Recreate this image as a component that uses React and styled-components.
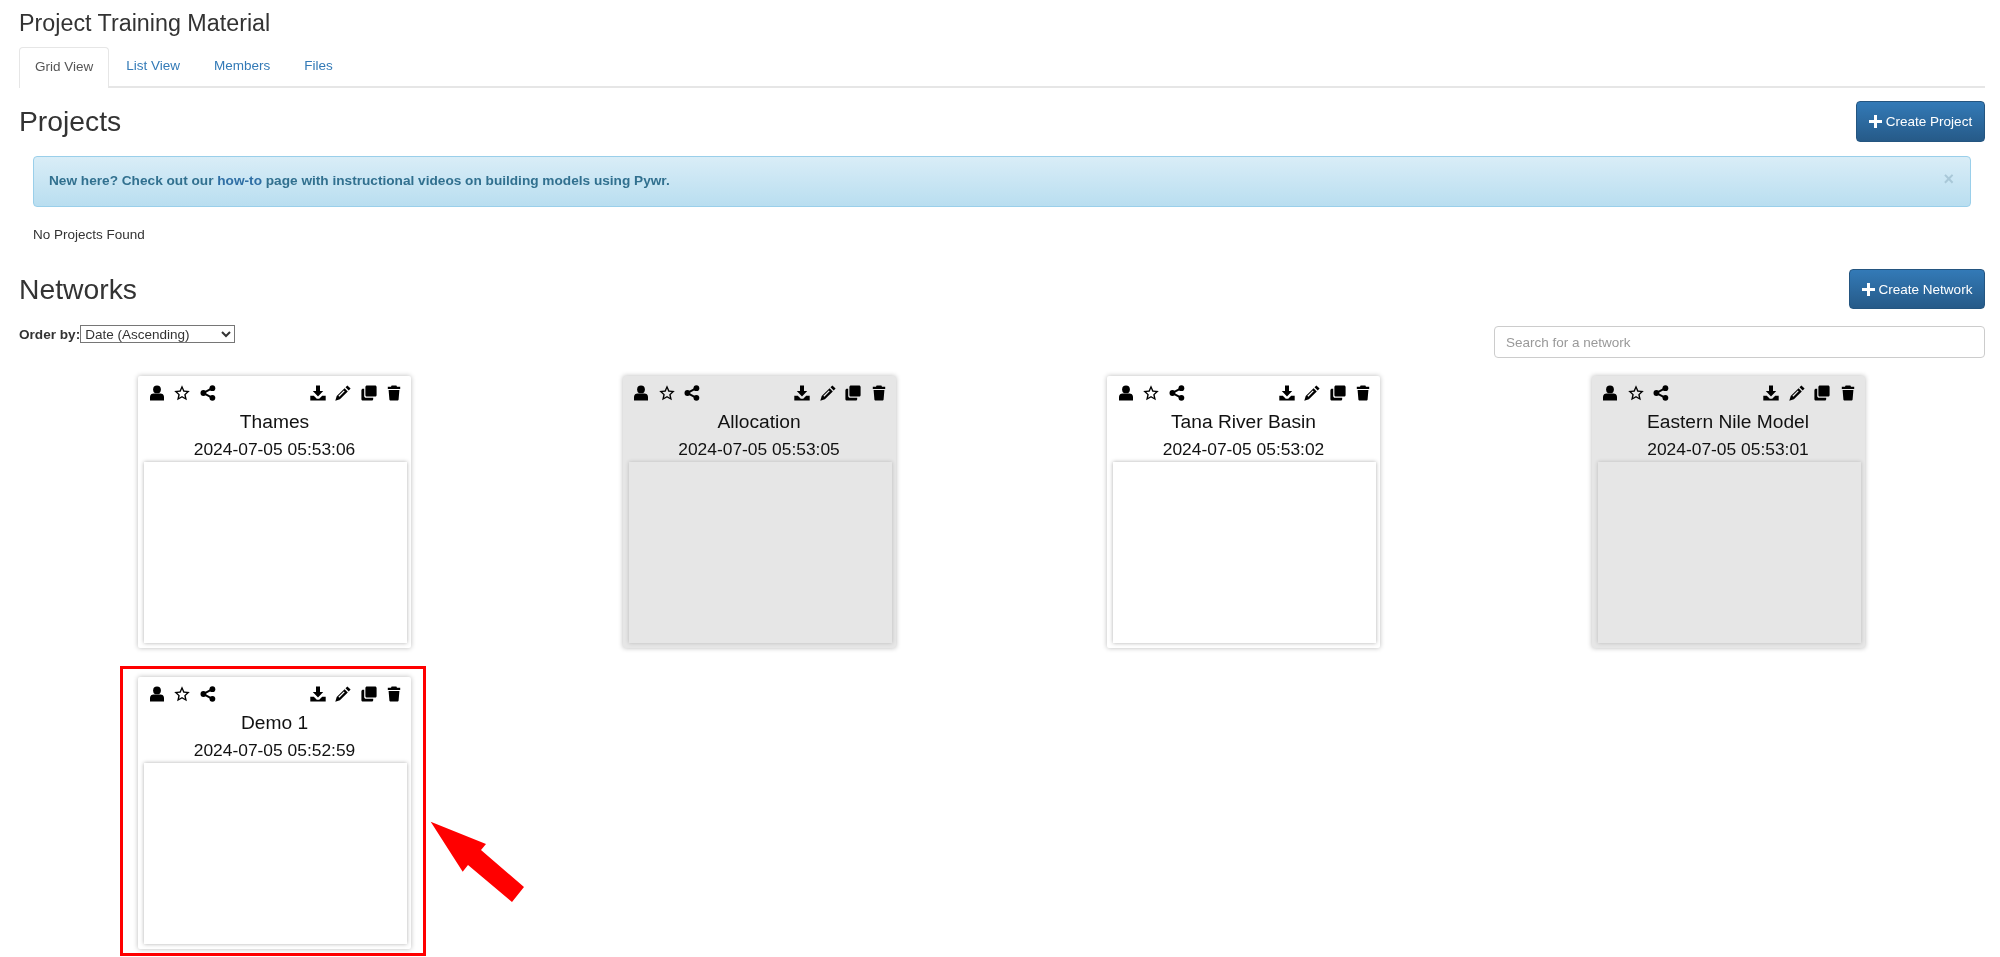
import React from "react";
import styled, { createGlobalStyle } from "styled-components";

const Global = createGlobalStyle`
  html, body { margin: 0; padding: 0; background: #fff; }
  body { font-family: "Liberation Sans", Arial, sans-serif; color: #333; }
  * { box-sizing: border-box; }
`;

const Page = styled.div`
  position: relative;
  width: 2000px;
  height: 957px;
  overflow: hidden;
  padding: 9px 15px 0 19px;
  filter: blur(0.35px);
`;
const PageTitle = styled.div`
  font-size: 23.3px;
  line-height: 28px;
  height: 38px;
`;
const Tabs = styled.nav`
  display: flex;
  height: 41px;
  border-bottom: 2px solid #e6e6e6;
`;
const Tab = styled.a`
  height: ${p => (p.$active ? "41px" : "39px")};
  padding: 0 ${p => (p.$active ? "15px" : "16.5px")};
  margin-right: ${p => (p.$active ? "0.5px" : "1px")};
  font-size: 13.5px;
  line-height: 37px;
  color: ${p => (p.$active ? "#555" : "#337ab7")};
  background: ${p => (p.$active ? "#fff" : "transparent")};
  border: ${p => (p.$active ? "1.5px solid #e6e6e6" : "none")};
  border-bottom: none;
  border-radius: 4px 4px 0 0;
`;
const HeadRow = styled.div`
  display: flex;
  justify-content: space-between;
  align-items: flex-start;
  margin-top: ${p => p.$top}px;
`;
const Heading = styled.h2`
  margin: ${p => p.$offset}px 0 0;
  font-size: 28.3px;
  font-weight: 400;
  line-height: 34px;
`;
const PrimaryButton = styled.button`
  display: inline-flex;
  align-items: center;
  justify-content: center;
  gap: 4px;
  width: ${p => p.$w}px;
  height: ${p => p.$h}px;
  padding: 0;
  font: 13.5px "Liberation Sans", Arial, sans-serif;
  color: #fff;
  background: linear-gradient(to bottom, #337ab7, #265a88);
  border: 1px solid #245580;
  border-radius: 4px;
`;
const PlusIcon = styled.svg`
  width: 13px;
  height: 13px;
  fill: #fff;
`;
const Body = styled.div`
  padding: 0 14px;
`;
const Alert = styled.div`
  position: relative;
  height: 51px;
  margin-top: 14px;
  padding: 0 15px;
  font-size: 13.65px;
  font-weight: 700;
  line-height: 47px;
  color: #31708f;
  background: linear-gradient(to bottom, #d9edf7, #b9def0);
  border: 1px solid #9acfea;
  border-radius: 4px;
`;
const AlertLink = styled.a`
  color: #2f6fa5;
`;
const Close = styled.span`
  position: absolute;
  top: 12px;
  right: 16px;
  font-size: 18px;
  line-height: 20px;
  font-weight: 700;
  color: #a9c8d8;
`;
const Empty = styled.p`
  margin: 19px 0 0;
  font-size: 13.5px;
  line-height: 17px;
`;
const ControlsRow = styled.div`
  display: flex;
  justify-content: space-between;
  align-items: flex-start;
  margin-top: 15px;
  height: 52px;
`;
const OrderLabel = styled.label`
  display: flex;
  align-items: center;
  margin-top: 1px;
  font-size: 13.6px;
  font-weight: 700;
`;
const OrderSelect = styled.select`
  width: 155px;
  height: 18px;
  padding: 0;
  font: 13.5px "Liberation Sans", Arial, sans-serif;
  color: #333;
  background: #fff;
  border: 1px solid #767676;
  border-radius: 0;
`;
const Search = styled.input`
  width: 491px;
  height: 32px;
  margin-top: 2px;
  padding: 0 11px;
  font: 13.5px "Liberation Sans", Arial, sans-serif;
  background: #fff;
  border: 1px solid #ccc;
  border-radius: 4px;
  &::placeholder { color: #999; opacity: 1; }
`;
const Grid = styled.div`
  display: grid;
  grid-template-columns: repeat(4, 484.5px);
  row-gap: 29px;
  margin-left: 14px;
`;
const Cell = styled.div`
  position: relative;
  width: 273px;
  margin-left: 105px;
`;
const Card = styled.article`
  display: flow-root;
  height: 272px;
  background: ${p => (p.$shaded ? "#e6e6e6" : "#fff")};
  border-radius: 2px;
  box-shadow: 0 0 5px rgba(0, 0, 0, 0.28);
  color: #111;
`;
const Tools = styled.div`
  display: flex;
  justify-content: space-between;
  margin-top: 9px;
  padding: 0 9px 0 10.5px;
`;
const ToolGroup = styled.div`
  display: flex;
  gap: 9.5px;
`;
const ToolIcon = styled.svg`
  display: block;
  width: 16px;
  height: 16px;
  fill: #000;
`;
const CardTitle = styled.div`
  margin-top: 9px;
  font-size: 19.2px;
  line-height: 24px;
  text-align: center;
`;
const CardDate = styled.div`
  margin-top: 3px;
  font-size: 17.4px;
  line-height: 24px;
  text-align: center;
`;
const Preview = styled.div`
  height: 181px;
  margin: 1px 4px 0 6px;
  background: ${p => (p.$shaded ? "#e6e6e6" : "#fff")};
  box-shadow: 0 0 4px rgba(0, 0, 0, ${p => (p.$shaded ? 0.2 : 0.32)});
`;
const Highlight = styled.div`
  position: absolute;
  top: -11px;
  left: -18px;
  width: 306px;
  height: 290px;
  border: 3px solid #f00;
`;
const Arrow = styled.svg`
  position: absolute;
  top: 810px;
  left: 420px;
  width: 115px;
  height: 100px;
  fill: #f00;
`;

const icons = {
  user: <><circle cx="8" cy="4.4" r="3.9" /><path d="M1 15.5v-3.6c0-2.3 1.7-3.4 3.6-3.4h6.8c1.9 0 3.6 1.1 3.6 3.4v3.6z" /></>,
  star: <path fillRule="evenodd" d="M8 .3l2.3 5.1 5.5.6-4.1 3.7 1.2 5.5L8 12.4l-4.9 2.8 1.2-5.5L.2 6l5.5-.6zM8 3.6L6.7 6.8l-3.4.3 2.5 2.3-.7 3.4L8 11l2.9 1.8-.7-3.4 2.5-2.3-3.4-.3z" />,
  share: <><circle cx="12.4" cy="3.2" r="2.9" /><circle cx="3.4" cy="8" r="2.9" /><circle cx="12.4" cy="12.8" r="2.9" /><path d="M3 7l9-4.8.9 1.7-9 4.8zM3.9 7.3l9 4.8-.9 1.7-9-4.8z" /></>,
  download: <path d="M6 .5h4v5.6h3.2L8 11.4 2.8 6.1H6zM.3 10.8h3.500l3 3h2.400l3-3h3.500v4.700H.3z" />,
  pencil: <path fillRule="evenodd" d="M12.400.4l3.200 3.200-1.900 1.900-3.200-3.200zM9.600 3.200l3.200 3.200-7.900 7.900-4.600 1.400 1.400-4.600zM8.800 5.400l-5.400 5.400.9.900 5.400-5.400z" />,
  copy: <path d="M6 .4h8c.9 0 1.600.7 1.600 1.600v8c0 .9-.7 1.600-1.600 1.600H6c-.9 0-1.600-.7-1.600-1.600V2C4.400 1.100 5.100.4 6 .4zM.4 5.400c0-.9.7-1.600 1.600-1.600h1.200V11c0 1 .8 1.800 1.800 1.800h7.200V14c0 .9-.7 1.600-1.600 1.600H2c-.9 0-1.600-.7-1.600-1.600z" />,
  trash: <path d="M5.600.4h4.800l.6 1.400h3.200v2.100H1.800V1.800H5zM2.600 4.900h10.800l-.8 9.500c-.1.7-.6 1.200-1.300 1.200H4.700c-.7 0-1.200-.5-1.300-1.200z" />,
};

const Tool = ({ name }) => <ToolIcon viewBox="0 0 16 16" aria-hidden="true">{icons[name]}</ToolIcon>;

const Plus = () => (
  <PlusIcon viewBox="0 0 13 13" aria-hidden="true"><path d="M5 0h3v5h5v3H8v5H5V8H0V5h5z" /></PlusIcon>
);

const networks = [
  { name: "Thames", date: "2024-07-05 05:53:06" },
  { name: "Allocation", date: "2024-07-05 05:53:05", shaded: true },
  { name: "Tana River Basin", date: "2024-07-05 05:53:02" },
  { name: "Eastern Nile Model", date: "2024-07-05 05:53:01", shaded: true },
  { name: "Demo 1", date: "2024-07-05 05:52:59", marked: true },
];

const NetworkCard = ({ name, date, shaded, marked }) => (
  <Cell>
    <Card $shaded={shaded}>
      <Tools>
        <ToolGroup>
          <Tool name="user" /><Tool name="star" /><Tool name="share" />
        </ToolGroup>
        <ToolGroup>
          <Tool name="download" /><Tool name="pencil" /><Tool name="copy" /><Tool name="trash" />
        </ToolGroup>
      </Tools>
      <CardTitle>{name}</CardTitle>
      <CardDate>{date}</CardDate>
      <Preview $shaded={shaded} />
    </Card>
    {marked && <Highlight />}
  </Cell>
);

export default function App() {
  return (
    <Page>
      <Global />
      <PageTitle>Project Training Material</PageTitle>
      <Tabs>
        <Tab $active>Grid View</Tab>
        <Tab>List View</Tab>
        <Tab>Members</Tab>
        <Tab>Files</Tab>
      </Tabs>
      <HeadRow $top={13}>
        <Heading $offset={3}>Projects</Heading>
        <PrimaryButton $w={129} $h={41}><Plus />Create Project</PrimaryButton>
      </HeadRow>
      <Body>
        <Alert>
          New here? Check out our <AlertLink>how-to</AlertLink> page with instructional videos on building models using Pywr.
          <Close>×</Close>
        </Alert>
        <Empty>No Projects Found</Empty>
      </Body>
      <HeadRow $top={26}>
        <Heading $offset={3}>Networks</Heading>
        <PrimaryButton $w={136} $h={40}><Plus />Create Network</PrimaryButton>
      </HeadRow>
      <ControlsRow>
        <OrderLabel>Order by:<OrderSelect defaultValue="asc"><option value="asc">Date (Ascending)</option></OrderSelect></OrderLabel>
        <Search placeholder="Search for a network" />
      </ControlsRow>
      <Grid>
        {networks.map(n => <NetworkCard key={n.name} {...n} />)}
      </Grid>
      <Arrow viewBox="0 0 115 100" aria-hidden="true">
        <path d="M10.700 11.700L66 34l-5 6 43 37-12 15-44-37-5.300 6.700z" />
      </Arrow>
    </Page>
  );
}
